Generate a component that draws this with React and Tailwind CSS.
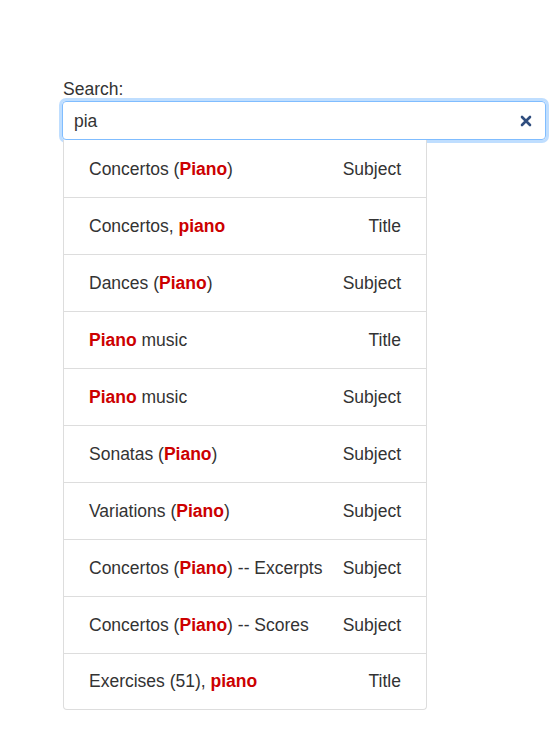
const results = [
  { parts: ['Concertos (', ['Piano'], ')'], type: 'Subject' },
  { parts: ['Concertos, ', ['piano']], type: 'Title' },
  { parts: ['Dances (', ['Piano'], ')'], type: 'Subject' },
  { parts: [['Piano'], ' music'], type: 'Title' },
  { parts: [['Piano'], ' music'], type: 'Subject' },
  { parts: ['Sonatas (', ['Piano'], ')'], type: 'Subject' },
  { parts: ['Variations (', ['Piano'], ')'], type: 'Subject' },
  { parts: ['Concertos (', ['Piano'], ') -- Excerpts'], type: 'Subject' },
  { parts: ['Concertos (', ['Piano'], ') -- Scores'], type: 'Subject' },
  { parts: ['Exercises (51), ', ['piano']], type: 'Title' },
];

export default function App() {
  return (
    <div
      className="min-h-screen bg-white pt-[78px] pl-[62px] pr-[8px] text-[17.5px] text-[#333]"
      style={{ fontFamily: '"Liberation Sans", Arial, sans-serif' }}
    >
      <label className="block leading-[22px] mb-px pl-px">Search:</label>
      <div className="relative">
        <div className="flex items-center h-[39px] border border-[#80bdff] rounded-[4px] shadow-[0_0_0_3px_rgba(0,123,255,0.25)] pl-[11px] pr-[12px]">
          <span className="flex-1 leading-[22px]">pia</span>
          <svg width="12" height="12" viewBox="0 0 12 12" className="mr-[1px]">
            <path d="M2 2L10 10M10 2L2 10" stroke="#2f4d7e" strokeWidth="2.6" strokeLinecap="round" />
          </svg>
        </div>
        <ul className="ml-px w-[364px] pt-px border border-t-0 border-[#ddd] rounded-b-[4px] bg-white">
          {results.map((r, i) => (
            <li
              key={i}
              className={`flex items-center justify-between pl-[25px] pr-[25px] ${
                i < results.length - 1 ? 'h-[57px] border-b border-[#ddd]' : 'h-[55px]'
              }`}
            >
              <span>
                {r.parts.map((p, j) =>
                  Array.isArray(p) ? (
                    <b key={j} className="font-bold text-[#c00]">{p[0]}</b>
                  ) : (
                    <span key={j}>{p}</span>
                  )
                )}
              </span>
              <span>{r.type}</span>
            </li>
          ))}
        </ul>
      </div>
    </div>
  );
}
